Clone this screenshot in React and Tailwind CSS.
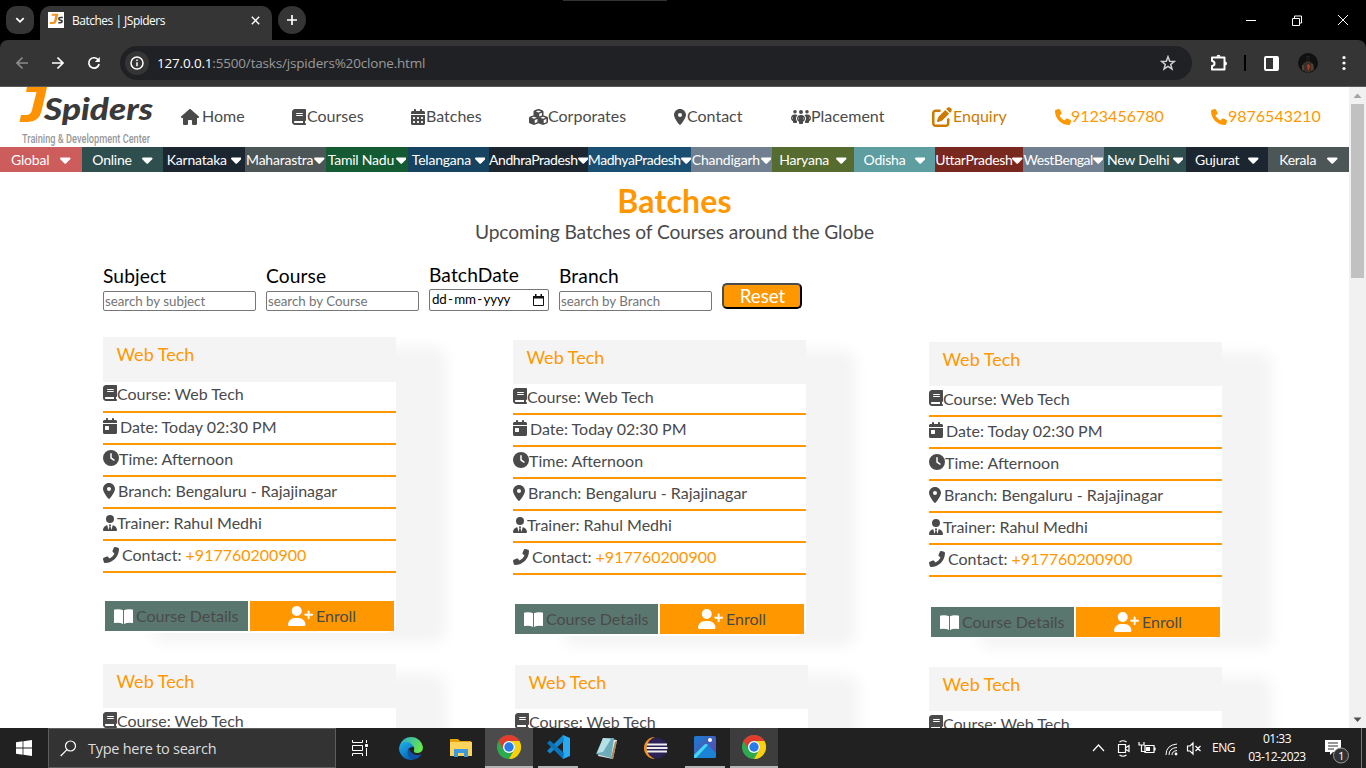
import React from 'react';
import {
  FaHouse, FaBook, FaCalendarDays, FaCubes, FaLocationDot, FaPeopleGroup, FaPenToSquare, FaPhone,
  FaCaretDown, FaCalendarDay, FaClock, FaUserTie, FaPhoneFlip, FaUserPlus,
} from 'react-icons/fa6';

const lato = "font-['Lato',sans-serif]";
const ui = "font-['Open_Sans',sans-serif]";

function BrowserChrome() {
  return (
    <div className={`h-[87px] shrink-0 bg-black ${ui}`}>
      <div className="flex h-10 items-start">
        <div className="ml-[6px] mt-[6px] flex h-7 w-7 items-center justify-center rounded-[10px] bg-[#353535]">
          <svg width="10" height="8" viewBox="0 0 10 8" fill="none" stroke="#fff" strokeWidth="1.8"><path d="M1.3 2.2 5 5.8 8.7 2.2" /></svg>
        </div>
        <div className="ml-[6px] mt-[6px] flex h-[34px] w-[232px] items-center rounded-t-[10px] bg-[#353535] pl-2 pb-[6px]">
          <svg width="16" height="16" viewBox="0 0 16 16">
            <rect width="16" height="16" fill="#fff" />
            <path d="M4 1.8h6.500L8.500 9.500Q7.800 12 5 12H1.800v-2h2.500Q5.700 10 6 9l1.300-5.200H3.500z" fill="#f7941d" />
            <path d="M14.800 5.500h-2.500q-1.500 0-1.500 1.300T12.500 8.200q1.800.2 1.600 1.400-.1 1.100-1.800 1.100h-2" fill="none" stroke="#333" strokeWidth="1.500" />
          </svg>
          <span className="ml-2 mt-px w-[179px] whitespace-nowrap text-[12px] leading-[18px] tracking-[-0.500px] text-white">Batches | JSpiders</span>
          <svg width="9" height="9" viewBox="0 0 9 9" stroke="#fff" strokeWidth="1.400"><path d="M.8.8 8.200 8.200M8.200.8.8 8.200" /></svg>
        </div>
        <div className="ml-[6px] mt-[6px] flex h-7 w-7 items-center justify-center rounded-full bg-[#353535]">
          <svg width="12" height="12" viewBox="0 0 12 12" stroke="#fff" strokeWidth="1.700"><path d="M6 1v10M1 6h10" /></svg>
        </div>
        <div className="ml-[257px] h-px w-[104px] bg-[#333]" />
        <div className="ml-auto flex h-10 items-center">
          <svg width="106" height="12" viewBox="0 0 106 12" fill="none" stroke="#fff" strokeWidth="1">
            <path d="M1 6.500h10M47.500 4.500h7v7h-7zM49.500 4V2h7v7h-2M93 1l10 10M103 1 93 11" />
          </svg>
          <div className="w-[15px]" />
        </div>
      </div>
      <div className="flex h-[47px] items-center rounded-t-[8px] border-b border-[#5a5a5a] bg-[#353535]">
        <svg className="ml-[15px]" width="90" height="16" viewBox="0 0 90 16" fill="none" strokeWidth="1.700">
          <path d="M13 8H2M7.500 2.500 2 8l5.500 5.500" stroke="#8b8b8b" />
          <path d="M37 8h11M42.500 2.500 48 8l-5.500 5.500" stroke="#fff" />
          <path d="M83.300 5A5.200 5.200 0 1 0 84.100 9" stroke="#fff" />
          <path d="M84.800 2v5h-5z" fill="#fff" stroke="none" />
        </svg>
        <div className="ml-[15px] flex h-[34px] w-[1072px] items-center rounded-full bg-[#202124]">
          <div className="ml-[5px] flex h-6 w-6 items-center justify-center rounded-full bg-[#353535]">
            <svg width="14" height="14" viewBox="0 0 14 14" fill="none" stroke="#fff" strokeWidth="1.500"><circle cx="7" cy="7" r="6" /><path d="M7 6.300v4M7 3.500V5" /></svg>
          </div>
          <span className="ml-[8px] whitespace-nowrap text-[13.500px] tracking-[-0.180px] text-[#9a9a9a]"><span className="text-white">127.0.0.1</span>:5500/tasks/jspiders%20clone.html</span>
          <svg className="ml-auto mr-4" width="16" height="16" viewBox="0 0 16 16" fill="none" stroke="#d0d0d0" strokeWidth="1.500"><path d="m8 1.700 1.700 4.500 4.700.2-3.700 3 1.300 4.600L8 11.400 4 14l1.300-4.600-3.700-3 4.700-.2z" /></svg>
        </div>
        <svg className="ml-[18px]" width="18" height="18" viewBox="0 0 18 18" fill="none" stroke="#fff" strokeWidth="2">
          <path d="M2 3.500h12.500v12H2V12q2.500-.3 2.500-2.500T2 7z" strokeLinejoin="round" /><path d="M6.500 2.800a2 2 0 0 1 4 0zM15 7.500a2 2 0 0 1 0 4z" fill="#fff" stroke="none" />
        </svg>
        <div className="ml-[16px] h-4 w-[2px] bg-black" />
        <svg className="ml-[18px]" width="15" height="15" viewBox="0 0 15 15"><rect x="1" y="1" width="13" height="13" rx="1" fill="none" stroke="#fff" strokeWidth="2" /><path d="M9 1h5v13H9z" fill="#fff" /></svg>
        <svg className="ml-[19px]" width="20" height="20" viewBox="0 0 20 20">
          <circle cx="10" cy="10" r="10" fill="#101010" />
          <path d="M4 17q-1-7 4-8V4q2-2 4 0v5q5 1 4 8l-6 3z" fill="#383029" /><circle cx="10" cy="6" r="2.500" fill="#171717" /><path d="m9 12 2-1 1 3-2 4z" fill="#b83b1b" /><path d="M5 12v5M14 11v6" stroke="#665449" />
        </svg>
        <svg className="ml-[24px]" width="4" height="16" viewBox="0 0 4 16" fill="#fff"><circle cx="2" cy="2.500" r="1.600" /><circle cx="2" cy="8" r="1.600" /><circle cx="2" cy="13.500" r="1.600" /></svg>
      </div>
    </div>
  );
}

const navItems = [
  { icon: FaHouse, label: 'Home', slot: 'w-[111px]', gap: 'gap-[3px]', size: 'w-[18px] h-4' },
  { icon: FaBook, label: 'Courses', slot: 'w-[119px]', gap: 'gap-px', size: 'w-[14px] h-4' },
  { icon: FaCalendarDays, label: 'Batches', slot: 'w-[118px]', gap: 'gap-px', size: 'w-[14px] h-4' },
  { icon: FaCubes, label: 'Corporates', slot: 'w-[145px]', gap: '', size: 'w-[19px] h-4' },
  { icon: FaLocationDot, label: 'Contact', slot: 'w-[117px]', gap: 'gap-px', size: 'w-[12px] h-4' },
  { icon: FaPeopleGroup, label: 'Placement', slot: 'w-[141px]', gap: '', size: 'w-[20px] h-4' },
  { icon: FaPenToSquare, label: 'Enquiry', slot: 'w-[123px] text-[#cc7a00]', gap: 'gap-px', size: 'w-[20px] h-5' },
  { icon: FaPhone, label: '9123456780', slot: 'w-[156px] text-[#ff9800]', gap: '', size: 'w-4 h-4' },
  { icon: FaPhone, label: '9876543210', slot: 'w-[120px] text-[#ff9800]', gap: 'gap-px', size: 'w-4 h-4' },
];

function Logo() {
  return (
    <svg width="181" height="60" viewBox="0 0 181 60" className="shrink-0">
      <path d="M27 0h20l-5.500 24Q39 35 28 35h-8.500l1.500-7H26q5 0 6-5l4.500-18H26z" fill="#ff9200" />
      <text x="44" y="33" fontFamily="Lato" fontWeight="900" fontStyle="italic" fontSize="31" textLength="109" lengthAdjust="spacingAndGlyphs" fill="#3a3a3a">Spiders</text>
      <text x="22" y="56" fontFamily="Roboto" fontWeight="500" fontSize="13.500" textLength="128" lengthAdjust="spacingAndGlyphs" fill="#999">Training &amp; Development Center</text>
    </svg>
  );
}

const states = [
  ['Global', 'w-[82px] bg-[#cd5c5c] justify-evenly'],
  ['Online', 'w-[81px] bg-[#2f4f4f] justify-evenly'],
  ['Karnataka', 'w-[82px] bg-[#1b2631] justify-evenly'],
  ['Maharastra', 'w-[81px] bg-[#4d5656] justify-evenly'],
  ['Tamil Nadu', 'w-[82px] bg-[#145a32] justify-evenly'],
  ['Telangana', 'w-[81px] bg-[#154360] justify-evenly'],
  ['AndhraPradesh', 'w-[99px] bg-[#1b2631] justify-center tracking-[-0.420px]'],
  ['MadhyaPradesh', 'w-[103px] bg-[#1b4f72] justify-center tracking-[-0.420px]'],
  ['Chandigarh', 'w-[81px] bg-[#708090] justify-evenly'],
  ['Haryana', 'w-[82px] bg-[#556b2f] justify-evenly'],
  ['Odisha', 'w-[81px] bg-[#5f9ea0] justify-evenly'],
  ['UttarPradesh', 'w-[88px] bg-[#78281f] justify-center tracking-[-0.350px]'],
  ['WestBengal', 'w-[81px] bg-[#708090] justify-center tracking-[-0.450px]'],
  ['New Delhi', 'w-[82px] bg-[#2f4f4f] justify-evenly'],
  ['Gujurat', 'w-[82px] bg-[#1b2631] justify-evenly'],
  ['Kerala', 'w-[81px] bg-[#4d5656] justify-evenly'],
];

const rows = [
  { icon: FaBook, text: 'Course: Web Tech', w: 'w-[14px]', gap: '', h: 'h-[31px]' },
  { icon: FaCalendarDay, text: 'Date: Today 02:30 PM', w: 'w-[14px]', gap: 'gap-[3px]', h: 'h-[32px] pb-[4px]' },
  { icon: FaClock, text: 'Time: Afternoon', w: 'w-[16px]', gap: '', h: 'h-[32px] pb-[4px]' },
  { icon: FaLocationDot, text: 'Branch: Bengaluru - Rajajinagar', w: 'w-[12px]', gap: 'gap-[3px]', h: 'h-[32px] pb-[3px]' },
  { icon: FaUserTie, text: 'Trainer: Rahul Medhi', w: 'w-[14px]', gap: '', h: 'h-[32px] pb-[3px]' },
  { icon: FaPhoneFlip, text: 'Contact:', phone: '+917760200900', w: 'w-[16px]', gap: 'gap-[3px]', h: 'h-[32px] pb-[3px]' },
];

function Card({ head, first = 'pb-[5px]', actions = 'mt-[29px]' }) {
  return (
    <div className="flex h-[296px] w-[293px] shrink-0 flex-col rounded-[10px] bg-white shadow-[50px_10px_15px_#f4f4f4]">
      <div className={`${head} shrink-0 bg-[#f4f4f4] pl-[13.500px] pt-[4px] text-[18px] leading-[26px] text-[#ff9800]`}>Web Tech</div>
      {rows.map(({ icon: Icon, text, phone, w, gap, h }, i) => (
        <div key={text} className={`flex ${h} ${i === 0 ? first : ''} ${gap} shrink-0 items-center border-b-2 border-[#ff9800] text-[16px] leading-[19px] text-[#4a4a4a]`}>
          <Icon className={`${w} h-4 shrink-0`} />
          <span className="whitespace-nowrap">{text}{phone && <span className="text-[#ff9800]"> {phone}</span>}</span>
        </div>
      ))}
      <div className={`${actions} flex gap-[2px] px-[2px] text-[16px] leading-[19px] text-[#4a4a4a]`}>
        <div className="flex h-[30px] w-[143px] items-center bg-[#5a776f] pl-[9px]">
          <svg className="mr-[3px] shrink-0" width="19" height="15" viewBox="0 0 19 15" fill="#fff">
            <path d="M0 1.200Q0 .6.700.5 6-.3 9 1.200V15Q6 13.200 0 14zM10 1.200Q13-.3 18.300.5 19 .6 19 1.200V14Q13 13.200 10 15z" />
          </svg>
          <span className="-mt-[2px] whitespace-nowrap">Course Details</span>
        </div>
        <div className="flex h-[30px] flex-1 items-center justify-center bg-[#ff9800]">
          <FaUserPlus className="mr-[3px] h-5 w-[25px] text-white" /><span className="-mt-[2px]">Enroll</span>
        </div>
      </div>
    </div>
  );
}

function Field({ label, placeholder }) {
  return (
    <label className="flex w-[153px] flex-col">
      <span className="text-[19.200px] leading-[23px] tracking-[0.120px] text-black">{label}</span>
      <input placeholder={placeholder} className="mt-1 h-5 w-full rounded-[2px] border border-[#767676] px-px text-[13.333px] leading-4 tracking-[-0.020px] placeholder:text-[#757575]" />
    </label>
  );
}

function Page() {
  return (
    <div className={`w-[1349px] overflow-hidden bg-white ${lato}`}>
      <div className="flex h-[60px] text-[16px] text-[#4a4a4a]">
        <Logo />
        {navItems.map(({ icon: Icon, label, slot, gap, size }) => (
          <div key={label} className={`flex h-[58px] shrink-0 items-center ${slot} ${gap}`}>
            <Icon className={`${size} mt-px shrink-0`} preserveAspectRatio="none" /><span>{label}</span>
          </div>
        ))}
      </div>
      <div className="flex h-[25px] tracking-[-0.220px]">
        {states.map(([name, cls]) => (
          <div key={name} className={`flex shrink-0 items-center whitespace-nowrap text-[14px] text-white ${cls}`}>
            <span>{name}</span>
            <FaCaretDown className="h-[17px] w-[10.500px] shrink-0" />
          </div>
        ))}
      </div>
      <div className="flex flex-col items-center pt-[9px]">
        <h1 className="text-[32px] font-bold leading-[40px] tracking-[0.150px] text-[#ff9800]">Batches</h1>
        <p className="-mt-px text-[19.200px] leading-[23px] tracking-[-0.110px] text-[#4a4a4a]">Upcoming Batches of Courses around the Globe</p>
      </div>
      <div className="ml-[103px] mt-[21px] flex h-[47px] items-end gap-[10px]">
        <Field label="Subject" placeholder="search by subject" />
        <Field label="Course" placeholder="search by Course" />
        <div className="flex w-[120px] flex-col">
          <span className="text-[19.200px] leading-[23px] tracking-[0.120px] text-black">BatchDate</span>
          <div className="mt-[3px] flex h-[22px] items-center justify-between rounded-[2px] border border-[#767676] pl-[2px] pr-1 text-[13.333px] tracking-[-0.200px] text-black">
            <span className="flex gap-[1.500px]"><span>dd</span><span>-</span><span>mm</span><span>-</span><span>yyyy</span></span>
            <svg width="11" height="12" viewBox="0 0 11 12"><path d="M.5 2.500h10v9H.5z" fill="none" stroke="#111" /><path d="M0 2h11v2.500H0zM2 0h1.500v2H2zM7.500 0H9v2H7.500z" fill="#111" /></svg>
          </div>
        </div>
        <Field label="Branch" placeholder="search by Branch" />
        <button className="mb-[2px] h-[26px] w-20 rounded-[5px] border-2 border-t-[#4c4c4c] border-l-[#4c4c4c] border-r-black border-b-black bg-[#ff9800] pl-px text-[18.700px] leading-[22px] text-white">Reset</button>
      </div>
      <div className="ml-[103px] mt-[26px] flex items-start">
        <div className="flex flex-col gap-[31px]"><Card head="h-[45px]" first="pb-[7px]" actions="mt-[28px]" /><Card head="h-[44px]" /></div>
        <div className="ml-[117px] flex flex-col gap-[29px] pt-[3px]"><Card head="h-[44px]" /><div className="pl-[2px]"><Card head="h-[44px]" /></div></div>
        <div className="ml-[121px] flex flex-col gap-[29px] pt-[5px]"><Card head="h-[44px]" actions="mt-[30px]" /><Card head="h-[44px]" /></div>
      </div>
    </div>
  );
}

function ChromeIcon() {
  return (
    <svg width="24" height="24" viewBox="0 0 24 24">
      <circle cx="12" cy="12" r="12" fill="#2da94f" />
      <path d="M1.600 6A12 12 0 0 1 22.400 6H12a6 6 0 0 0-5.200 9z" fill="#e33b2e" />
      <path d="M22.400 6A12 12 0 0 1 12 24l5.200-9A6 6 0 0 0 12 6z" fill="#fdd00c" />
      <circle cx="12" cy="12" r="6" fill="#fff" /><circle cx="12" cy="12" r="4.700" fill="#287be8" />
    </svg>
  );
}

function EdgeIcon() {
  return (
    <svg width="24" height="24" viewBox="0 0 24 24">
      <defs>
        <linearGradient id="eg" x1="0" y1="0" x2="1" y2="0.400"><stop offset="0" stopColor="#25a5df" /><stop offset="1" stopColor="#66e54e" /></linearGradient>
        <linearGradient id="eb" x1="0" y1="0" x2="0.600" y2="1"><stop offset="0" stopColor="#22b5ef" /><stop offset="1" stopColor="#0766b9" /></linearGradient>
      </defs>
      <path d="M.5 10A12 12 0 0 1 24 11q0 6-6 6-4 0-3-3 1-3-2-4.500Q7 7 .5 10z" fill="url(#eg)" />
      <path d="M0 12q1-6 7-6 6 0 7 5-5 0-5 5t5 7.800A12 12 0 0 1 0 12z" fill="url(#eb)" />
      <path d="M9.500 12Q6 20 14 23.800q6-1 8.500-5.500Q13 21 9.500 12z" fill="#1153a3" />
    </svg>
  );
}

function Taskbar() {
  return (
    <div className={`flex h-10 shrink-0 items-stretch bg-[#212121] ${ui} text-white`}>
      <div className="flex w-12 items-center justify-center">
        <svg width="16" height="16" viewBox="0 0 16 16" fill="#fff"><path d="M0 2.200 6.600 1.300v6.300H0zM7.400 1.200 16 0v7.600H7.400zM0 8.400h6.600v6.300L0 13.800zM7.400 8.400H16V16l-8.600-1.200z" /></svg>
      </div>
      <div className="flex w-[288px] items-center border border-[#5e5e5e] bg-[#333]">
        <svg className="ml-[11px]" width="17" height="17" viewBox="0 0 17 17" fill="none" stroke="#fff" strokeWidth="1.200"><circle cx="10.500" cy="6" r="5" /><path d="M7 9.700.7 16" /></svg>
        <span className="ml-[11px] mt-[2px] text-[14.500px] tracking-[-0.270px] text-[#dedede]">Type here to search</span>
      </div>
      <div className="flex w-12 items-center justify-center">
        <svg width="16" height="16" viewBox="0 0 16 16" fill="none" stroke="#fff"><path d="M.5 0v2.500h10V0M.5 5.500h10v5H.5zM.5 16v-2.500h10V16M14.500 0v3M14.500 8v8" /><path d="M13.500 4.500h2v2h-2z" fill="#fff" /></svg>
      </div>
      <div className="flex w-[53px] items-center justify-center"><EdgeIcon /></div>
      <div className="flex w-[48px] items-center justify-center">
        <svg className="-ml-px" width="22" height="18" viewBox="0 0 22 18"><path d="M0 0h8l2 2h11v4H0z" fill="#e5a400" /><path d="M0 3h22v14H0z" fill="#ffd45b" /><path d="M4 10h14v8h-4v-4H8v4H4z" fill="#3d9ae0" /></svg>
      </div>
      <div className="flex w-12 items-center justify-center border-b-2 border-[#b5b5b5] bg-[#4b4b4b]"><ChromeIcon /></div>
      <div className="mx-[5px] flex w-10 items-center justify-center border-b-2 border-[#b5b5b5]">
        <svg width="24" height="24" viewBox="0 0 24 24"><path d="m17 0 7 3v18l-7 3z" fill="#2aaaf2" /><path d="m17 0 1 6L4 18.500 1 16z" fill="#1488ce" /><path d="m17 24 1-6L4 5.500 1 8z" fill="#0a74bb" /></svg>
      </div>
      <div className="flex w-[48px] items-center justify-center">
        <svg width="22" height="22" viewBox="0 0 22 22"><path d="m7 1 14 2-4 19-15-3z" fill="#e0e0dc" /><path d="M7 1h11l-3 20L0 17z" fill="#6cacb9" /><path d="m7 1 8 1-8 13-6 1z" fill="#b6e0e6" /><path d="m19 5 2-1-4 18-2-1z" fill="#a6865a" /></svg>
      </div>
      <div className="flex w-[49px] items-center justify-center">
        <svg width="24" height="24" viewBox="0 0 24 24"><path d="M11 1a11 11 0 0 0 0 22A12 12 0 0 1 11 1z" fill="#f39222" /><circle cx="13" cy="12" r="10.500" fill="#2c2255" /><path d="M3 8.500h20M2.500 12h21M3 15.500h20" stroke="#eee" strokeWidth="1.800" /></svg>
      </div>
      <div className="ml-[5px] flex w-10 items-center justify-center border-b-2 border-[#b5b5b5]">
        <svg width="22" height="22" viewBox="0 0 22 22"><defs><linearGradient id="ph" x1="0" y1="0" x2="1" y2="1"><stop offset="0" stopColor="#177ed3" /><stop offset="1" stopColor="#6b42a5" /></linearGradient></defs><rect width="22" height="22" rx="1.500" fill="url(#ph)" /><path d="m0 19 10-10q2-2 4 0l8 8v3q0 2-2 2H0z" fill="#1b83d5" /><path d="m0 19 10-10q2-2 4 0L2 22H0z" fill="#45d7f0" /><circle cx="16" cy="4" r="2" fill="#fff" /></svg>
      </div>
      <div className="ml-[5px] flex w-12 items-center justify-center border-b-2 border-[#b5b5b5] bg-[#3d3d3d]"><ChromeIcon /></div>
      <div className="ml-auto flex items-center">
        <svg width="110" height="20" viewBox="0 0 110 20" fill="none" stroke="#fff" strokeWidth="1.200">
          <path d="m1 13 5.500-6 5.500 6" />
          <path d="M26.500 6.500h7v8h-7zM34 9.500l3-2v6l-3-2M27.500 4q3.500-2.500 7 0M27.500 17q3.500 2.500 7 0" />
          <path d="M53 7.500h9v7h-9zM63 9.500v3M47 4v3h5V4M49.500 7v6.500H54" /><path d="M54 9h4v4h-4z" fill="#fff" stroke="none" />
          <path d="M74 17q0-10 11-11M77 17q0-7 8-7.500M80 17q0-4 5-4.500" strokeWidth="1" /><circle cx="84" cy="16" r="1.400" fill="#fff" stroke="none" />
          <path d="M95.500 8h2.500l3-3v11l-3-3h-2.500zM103.500 8l5 5M108.500 8l-5 5" />
        </svg>
        <span className="ml-[10px] w-[35px] text-[12px] tracking-[-0.450px]">ENG</span>
        <div className="w-[60px] text-center text-[12px] leading-[18px] tracking-[-0.520px]"><div>01:33</div><div className="whitespace-nowrap">03-12-2023</div></div>
        <svg className="ml-[18px] shrink-0" width="26" height="32" viewBox="0 0 26 32"><path d="M0 8h16v12H8l-3 3v-3H0z" fill="#fff" /><path d="M3 11h10M3 14h10M3 17h6" stroke="#333" /><circle cx="16" cy="23.500" r="7.500" fill="#333" stroke="#999" /><text x="13" y="27.500" fontSize="11.500" fill="#fff" fontFamily="Open Sans">1</text></svg>
        <div className="ml-[10px] h-10 w-px bg-[#777]" /><div className="w-1" />
      </div>
    </div>
  );
}

export default function App() {
  return (
    <div className="flex h-[768px] w-[1366px] flex-col overflow-hidden bg-white">
      <BrowserChrome />
      <div className="flex min-h-0 flex-1 overflow-hidden">
        <Page />
        <div className="flex w-[17px] flex-col items-center bg-[#f1f1f1]">
          <svg className="shrink-0" width="17" height="17" viewBox="0 0 17 17"><path d="m4.500 11 4-4.500 4 4.500z" fill="#a3a3a3" /></svg>
          <div className="h-[174px] w-[13px] bg-[#c1c1c1]" />
          <svg className="mt-auto shrink-0" width="17" height="17" viewBox="0 0 17 17"><path d="m4.500 6.500 4 4.500 4-4.500z" fill="#505050" /></svg>
        </div>
      </div>
      <Taskbar />
    </div>
  );
}
